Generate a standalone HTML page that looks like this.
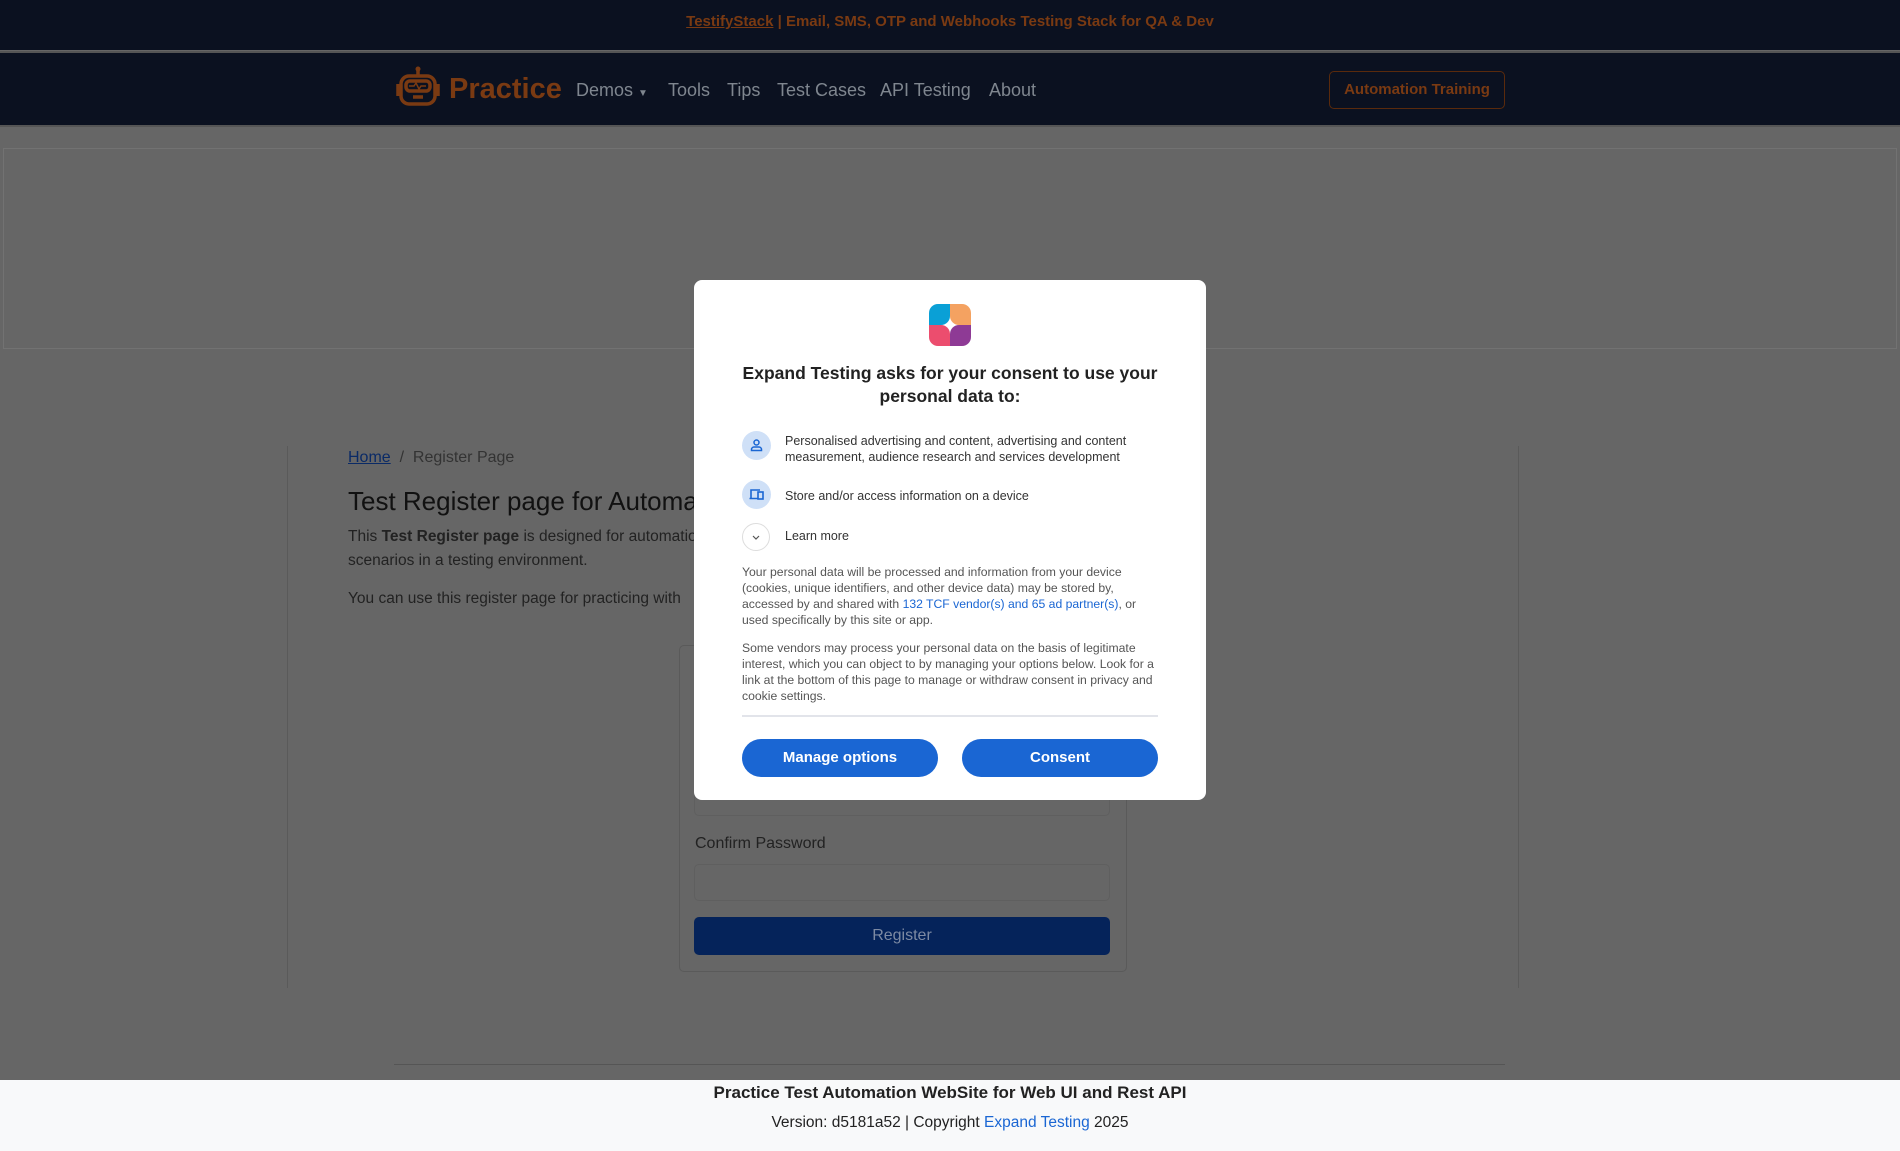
<!DOCTYPE html>
<html><head><meta charset="utf-8"><style>
*{box-sizing:border-box;margin:0;padding:0}
body{width:1900px;height:1151px;overflow:hidden;background:#666;font-family:"Liberation Sans",sans-serif;position:relative;color:#111}
.abs{position:absolute}
.topbar{left:0;top:0;width:1900px;height:50px;background:#0b1120;text-align:center;line-height:44px;font-size:15px;font-weight:bold;color:#7a3a12}
.topbar u{color:#7a3a12}
.nav{left:0;top:51px;width:1900px;height:76px;background:#0b1120;border-top:2px solid #555;border-bottom:2px solid #555}
.nav a{position:absolute;top:27px;font-size:18px;color:#7f868f;text-decoration:none}
.btn-at{left:1329px;top:18px;width:176px;height:38px;border:1px solid #5a2a0c;border-radius:5px;color:#7a3a12;font-size:15px;font-weight:bold;text-align:center;line-height:36px}
.ad{left:3px;top:148px;width:1894px;height:201px;border:1px solid #727272}
.vl{top:446px;width:1px;height:542px;background:#5a5a5a}
.modal{left:694px;top:280px;width:512px;height:520px;background:#fff;border-radius:8px}
.modal p{font-size:12.2px;color:#555;line-height:16px}
.ic{position:absolute;left:48px;width:29px;height:29px;border-radius:50%;background:#cfe0f7}
.mb{position:absolute;top:459px;width:196px;height:38px;border-radius:19px;background:#1a66d3;color:#fff;font-weight:bold;font-size:15px;text-align:center;line-height:38px}
</style></head><body>
<div class="abs topbar"><u>TestifyStack</u> | Email, SMS, OTP and Webhooks Testing Stack for QA &amp; Dev</div>
<div class="abs nav">
<svg class="abs" style="left:394px;top:13px" width="48" height="42" viewBox="0 0 48 42" fill="none" stroke="#7a3a12" stroke-width="3.5"><circle cx="24" cy="3" r="2.5" fill="#7a3a12" stroke="none"/><line x1="24" y1="4" x2="24" y2="10"/><rect x="7" y="10" width="34" height="28" rx="8"/><rect x="12" y="15" width="24" height="10" rx="4"/><path d="M15 20h5l2-3 3 6 2-3h5" stroke-width="1.5"/><line x1="19" y1="31" x2="29" y2="31"/><path d="M4 18v12M44 18v12"/></svg>
<div class="abs" style="left:449px;top:20px;font-size:29px;font-weight:bold;color:#7a3a12">Practice</div>
<a style="left:576px">Demos <span style="font-size:10px">▼</span></a>
<a style="left:668px">Tools</a><a style="left:727px">Tips</a><a style="left:777px">Test Cases</a><a style="left:880px">API Testing</a><a style="left:989px">About</a>
<div class="abs btn-at">Automation Training</div>
</div>
<div class="abs ad"></div>
<div class="abs vl" style="left:287px"></div><div class="abs vl" style="left:1518px"></div>
<div class="abs" style="left:348px;top:449px;font-size:16px;color:#333"><u style="color:#0a2a66">Home</u> &nbsp;/&nbsp; Register Page</div>
<div class="abs" style="left:348px;top:486px;font-size:26px;font-weight:500;color:#111">Test Register page for Automation</div>
<div class="abs" style="left:348px;top:525px;font-size:15.5px;line-height:24px;color:#222;width:600px">This <b>Test Register page</b> is designed for automation testing<br>scenarios in a testing environment.</div>
<div class="abs" style="left:348px;top:590px;font-size:15.5px;color:#222">You can use this register page for practicing with</div>
<div class="abs" style="left:679px;top:645px;width:448px;height:327px;border:1px solid #5a5a5a;border-radius:5px"></div>
<div class="abs" style="left:694px;top:770px;width:416px;height:46px;border:1px solid #5f5f5f;border-radius:5px"></div>
<div class="abs" style="left:695px;top:835px;font-size:16px;color:#222">Confirm Password</div>
<div class="abs" style="left:694px;top:864px;width:416px;height:37px;border:1px solid #5f5f5f;border-radius:5px"></div>
<div class="abs" style="left:694px;top:917px;width:416px;height:38px;background:#05235a;border-radius:5px;color:#7d8aa3;font-size:16px;text-align:center;line-height:38px">Register</div>
<div class="abs" style="left:394px;top:1064px;width:1111px;height:1px;background:#555"></div>
<div class="abs" style="left:0;top:1080px;width:1900px;height:71px;background:#f8f9fa;text-align:center">
<div style="font-size:17px;font-weight:bold;color:#222;margin-top:3px">Practice Test Automation WebSite for Web UI and Rest API</div>
<div style="font-size:15.5px;color:#222;margin-top:11px">Version: d5181a52 | Copyright <span style="color:#1a66d3">Expand Testing</span> 2025</div>
</div>
<div class="abs modal">
<svg class="abs" style="left:235px;top:24px" width="42" height="42" viewBox="0 0 42 42"><rect width="42" height="42" rx="9" fill="#fff"/><path d="M0 9a9 9 0 0 1 9-9h12v12a9 9 0 0 1-9 9H0z" fill="#0aa0d6"/><path d="M21 0h12a9 9 0 0 1 9 9v12H30a9 9 0 0 1-9-9z" fill="#f4a261"/><path d="M0 21h12a9 9 0 0 1 9 9v12H9a9 9 0 0 1-9-9z" fill="#ec4d6e"/><path d="M30 21h12v12a9 9 0 0 1-9 9H21V30a9 9 0 0 1 9-9z" fill="#8e3a95"/></svg>
<div class="abs" style="left:20px;top:82px;width:472px;text-align:center;font-size:17.5px;font-weight:bold;color:#222;line-height:23px">Expand Testing asks for your consent to use your personal data to:</div>
<div class="ic" style="top:151px"><svg width="29" height="29" viewBox="0 0 29 29" fill="none" stroke="#1a66d3" stroke-width="1.5"><circle cx="14.5" cy="11.5" r="2.5"/><path d="M9.5 19.5v-1a2.5 2.5 0 0 1 2.5-2.5h5a2.5 2.5 0 0 1 2.5 2.5v1z"/></svg></div>
<div class="abs" style="left:91px;top:153px;font-size:12.5px;color:#333;line-height:16px">Personalised advertising and content, advertising and content<br>measurement, audience research and services development</div>
<div class="ic" style="top:200px"><svg width="29" height="29" viewBox="0 0 29 29" fill="none" stroke="#1a66d3" stroke-width="1.6"><path d="M9 18v-8h9M7.5 18.5h8"/><rect x="16" y="12" width="5" height="7"/></svg></div>
<div class="abs" style="left:91px;top:209px;font-size:12.5px;color:#333">Store and/or access information on a device</div>
<div class="abs" style="left:48px;top:243px;width:28px;height:28px;border:1px solid #ddd;border-radius:50%"><svg width="26" height="26" viewBox="0 0 26 26" fill="none" stroke="#555" stroke-width="1.2"><path d="M10 12l3 3 3-3"/></svg></div>
<div class="abs" style="left:91px;top:249px;font-size:12.5px;color:#333">Learn more</div>
<p class="abs" style="left:48px;top:284px;width:420px">Your personal data will be processed and information from your device (cookies, unique identifiers, and other device data) may be stored by, accessed by and shared with <span style="color:#1a66d3">132 TCF vendor(s) and 65 ad partner(s)</span>, or used specifically by this site or app.</p>
<p class="abs" style="left:48px;top:360px;width:420px">Some vendors may process your personal data on the basis of legitimate interest, which you can object to by managing your options below. Look for a link at the bottom of this page to manage or withdraw consent in privacy and cookie settings.</p>
<div class="abs" style="left:48px;top:435px;width:416px;height:2px;background:#e2e4ea"></div>
<div class="mb" style="left:48px">Manage options</div>
<div class="mb" style="left:268px">Consent</div>
</div>
</body></html>
